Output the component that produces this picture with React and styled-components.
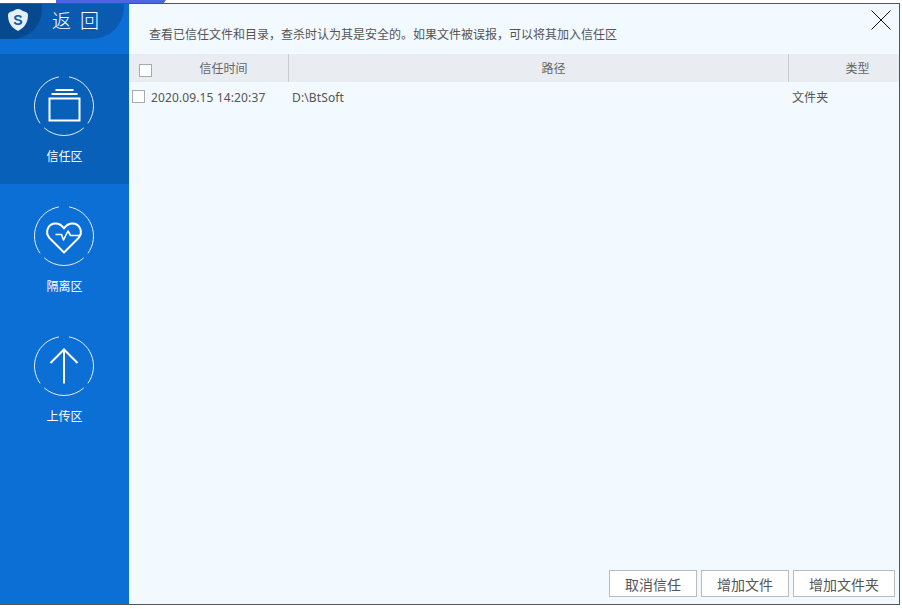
import React from 'react';
import styled, { createGlobalStyle } from 'styled-components';

const GlobalStyle = createGlobalStyle`
  html, body {
    margin: 0;
    padding: 0;
    background: #fff;
    font-family: "Noto Sans", "Noto Sans CJK SC", sans-serif;
  }
`

const Page = styled.div`
  width: 902px;
  height: 609px;
  overflow: hidden;
`

const TopStrip = styled.div`
  height: 3px;
  padding-left: 56px;
`

const TopTab = styled.div`
  width: 110px;
  height: 3px;
  background: #4a66e0;
  clip-path: polygon(0 0, 100% 0, 98% 100%, 0 100%);
`

const Win = styled.div`
  width: 900px;
  height: 602px;
  box-sizing: border-box;
  display: flex;
  border-top: 1px solid #555;
  border-right: 1px solid #555;
  border-bottom: 1px solid #555;
  background: #f2f9ff;
`

const Sidebar = styled.aside`
  width: 129px;
  flex: none;
  background: #0c6fd6;
  display: flex;
  flex-direction: column;
`

const BackBar = styled.div`
  height: 35px;
  width: 124px;
  margin-bottom: 15px;
  display: flex;
  align-items: center;
  background: #0a5bb0;
  border-bottom-right-radius: 32px;
  color: #fff;
`

const LogoBox = styled.div`
  width: 42px;
  height: 35px;
  flex: none;
  display: flex;
  align-items: center;
  justify-content: center;
  padding: 0 6px 4px 0;
  box-sizing: border-box;
  background: #07498f;
  border-bottom-right-radius: 30px;
`

const BackText = styled.span`
  margin-left: 10px;
  font-size: 19px;
  font-weight: 300;
  line-height: 35px;
  letter-spacing: 3px;
  word-spacing: -2px;
`

const NavItem = styled.div`
  height: 130px;
  box-sizing: border-box;
  padding-top: 22px;
  display: flex;
  flex-direction: column;
  align-items: center;
  background: ${(p) => (p.$active ? '#0860b8' : 'transparent')};
  color: #fff;
`

const NavIcon = styled.svg`
  display: block;
  width: 61px;
  height: 61px;
  margin-bottom: 12px;
`

const NavLabel = styled.div`
  font-size: 12px;
  line-height: 16px;
`

const Main = styled.main`
  flex: 1;
  min-width: 0;
  display: flex;
  flex-direction: column;
`

const Head = styled.div`
  height: 50px;
  flex: none;
  position: relative;
  box-sizing: border-box;
  padding: 23px 0 0 20px;
  font-size: 12px;
  line-height: 16px;
  color: #555;
`

const CloseIcon = styled.svg`
  position: absolute;
  top: 6px;
  right: 8px;
  width: 20px;
  height: 20px;
`

const TableRow = styled.div`
  display: grid;
  grid-template-columns: 160px 500px 1fr;
  align-items: center;
  font-size: 12px;
  color: #555;
`

const HeaderRow = styled(TableRow)`
  height: 28px;
  background: #e9edf2;
  color: #666;
`

const BodyRow = styled(TableRow)`
  height: 30px;
  letter-spacing: 0.12px;
`

const HeaderCell = styled.div`
  height: 100%;
  box-sizing: border-box;
  display: flex;
  align-items: center;
  justify-content: center;
  padding-left: ${(p) => p.$pad}px;
  border-right: ${(p) => (p.$last ? 'none' : '1px solid #c8cccf')};
`

const HeaderTitle = styled.span`
  flex: 1;
  margin-left: 7px;
  text-align: center;
`

const BodyCell = styled.div`
  display: flex;
  align-items: center;
  padding-left: ${(p) => p.$pad}px;
  white-space: nowrap;
`

const Check = styled.span`
  width: 13px;
  height: 13px;
  flex: none;
  box-sizing: border-box;
  background: #fff;
  border: 1px solid #aaa;
`

const HeaderCheck = styled(Check)`
  margin-top: 4px;
`

const RowCheck = styled(Check)`
  margin-right: 6px;
  margin-top: -1px;
`

const TableBody = styled.div`
  flex: 1;
`

const Footer = styled.div`
  flex: none;
  display: flex;
  justify-content: flex-end;
  gap: 4px;
  padding: 0 4px 7px 0;
`

const Btn = styled.button`
  width: ${(p) => p.$w}px;
  height: 27px;
  box-sizing: border-box;
  padding: 0;
  background: #fff;
  border: 1px solid #bbb;
  color: #555;
  font-family: inherit;
  font-size: 14px;
`

const polar = (deg) => {
  const a = ((deg - 90) * Math.PI) / 180
  return `${(30.5 + 29.5 * Math.cos(a)).toFixed(2)} ${(30.5 + 29.5 * Math.sin(a)).toFixed(2)}`
}

const arc = (from, to) => `M${polar(from)} A29.5 29.5 0 ${to - from > 180 ? 1 : 0} 1 ${polar(to)}`

// ring with the three small gaps, shared by all nav icons
const Ring = () => (
  <g fill="none" stroke="#fff" strokeWidth="1" opacity="0.9">
    <path d={arc(10, 126)} />
    <path d={arc(138, 222)} />
    <path d={arc(234, 350)} />
  </g>
)

const FolderGlyph = () => (
  <g fill="none" stroke="#fff" strokeWidth="2">
    <rect x="16" y="23" width="30" height="22" />
    <path d="M18 18.5H44M22 14.5H40" />
  </g>
)

const HeartGlyph = () => (
  <g fill="none" stroke="#fff" strokeWidth="1.6" strokeLinejoin="round">
    <path d="M30.5 47 L16 32.5 C11 27 14.5 18 22 18 C26 18 28.5 20 30.5 23 C32.5 20 35 18 39 18 C46.5 18 50 27 45 32.5 Z" strokeWidth="2" />
    <path d="M22 29 H28 L30 34.5 L34.5 25.5 L37 30 H47" />
  </g>
)

const ArrowGlyph = () => (
  <g fill="none" stroke="#fff" strokeWidth="2">
    <path d="M30.5 14V48M17 27.5L30.5 14L44 27.5" />
  </g>
)

const navItems = [
  { label: '信任区', Glyph: FolderGlyph, active: true },
  { label: '隔离区', Glyph: HeartGlyph },
  { label: '上传区', Glyph: ArrowGlyph },
]

const App = () => (
  <Page>
    <GlobalStyle />
    <TopStrip><TopTab /></TopStrip>
    <Win>
      <Sidebar>
        <BackBar>
          <LogoBox>
            <svg width="20" height="22" viewBox="0 0 20 22">
              <path d="M10 0 C12.5 0 14 2 16.5 2.5 C18.5 3 20 4 20 6 C20 13 17 18.5 10 22 C3 18.5 0 13 0 6 C0 4 1.5 3 3.5 2.5 C6 2 7.5 0 10 0Z" fill="#e6eff8" />
              <text x="10" y="16" textAnchor="middle" fontSize="14" fontWeight="700" fontFamily="Liberation Sans, sans-serif" fill="#0a5bb0">S</text>
            </svg>
          </LogoBox>
          <BackText>返 回</BackText>
        </BackBar>
        {navItems.map(({ label, Glyph, active }) => (
          <NavItem key={label} $active={active}>
            <NavIcon viewBox="0.5 0.5 61 61">
              <Ring />
              <Glyph />
            </NavIcon>
            <NavLabel>{label}</NavLabel>
          </NavItem>
        ))}
      </Sidebar>
      <Main>
        <Head>
          查看已信任文件和目录，查杀时认为其是安全的。如果文件被误报，可以将其加入信任区
          <CloseIcon viewBox="0 0 20 20">
            <path d="M0.5 0.5L19.5 19.5M19.5 0.5L0.5 19.5" stroke="#111" strokeWidth="1" fill="none" />
          </CloseIcon>
        </Head>
        <HeaderRow>
          <HeaderCell $pad={10}><HeaderCheck /><HeaderTitle>信任时间</HeaderTitle></HeaderCell>
          <HeaderCell $pad={30}>路径</HeaderCell>
          <HeaderCell $pad={27} $last>类型</HeaderCell>
        </HeaderRow>
        <TableBody>
          <BodyRow>
            <BodyCell $pad={3}><RowCheck />2020.09.15 14:20:37</BodyCell>
            <BodyCell $pad={3}>D:\BtSoft</BodyCell>
            <BodyCell $pad={3}>文件夹</BodyCell>
          </BodyRow>
        </TableBody>
        <Footer>
          <Btn $w={88}>取消信任</Btn>
          <Btn $w={88}>增加文件</Btn>
          <Btn $w={102}>增加文件夹</Btn>
        </Footer>
      </Main>
    </Win>
  </Page>
)

export default App;
